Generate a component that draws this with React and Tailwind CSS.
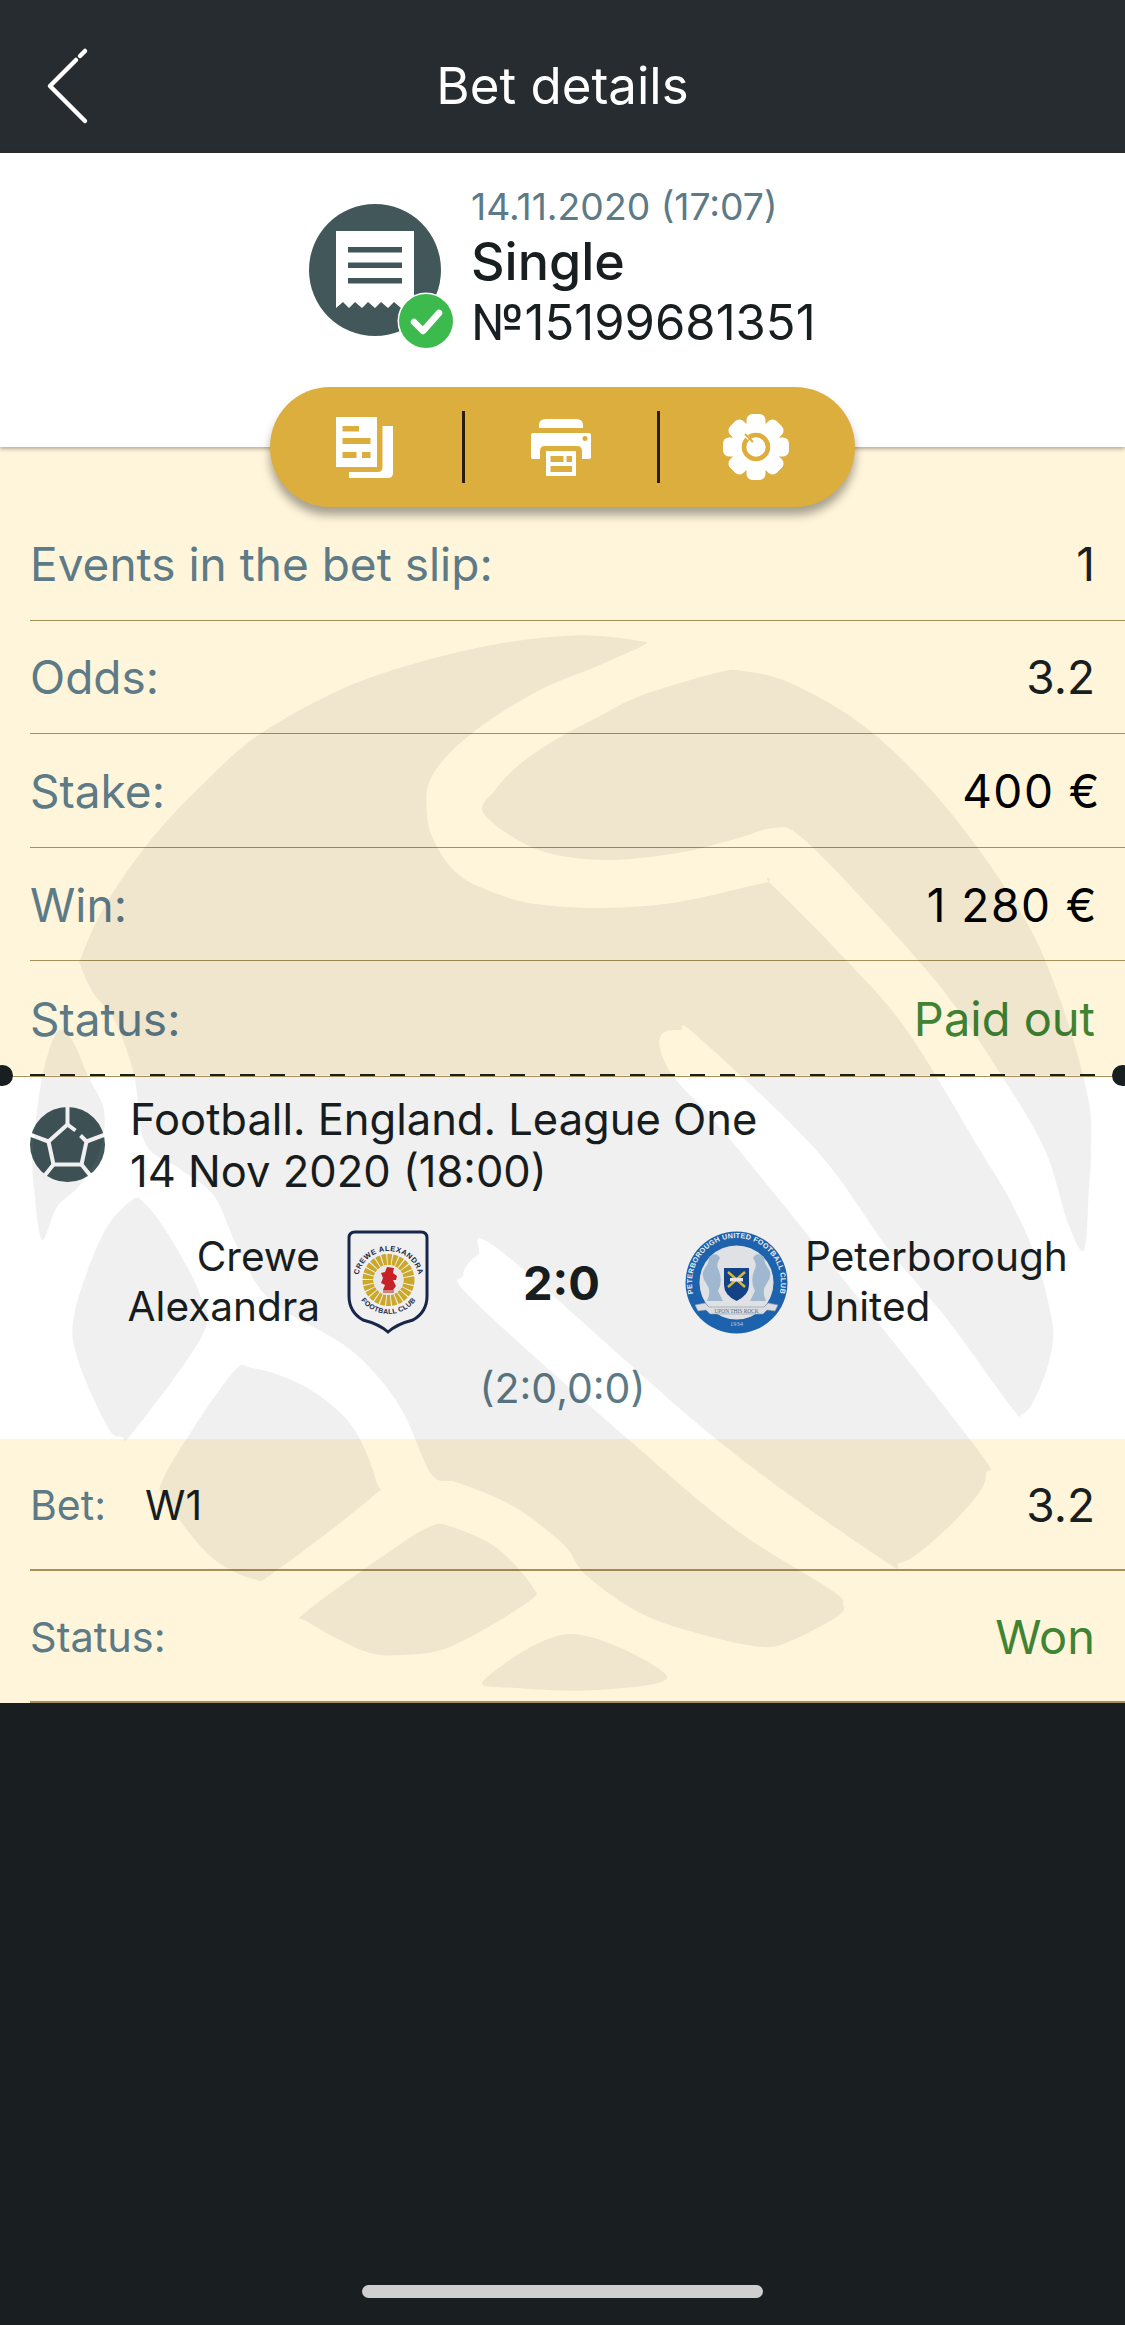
import React from "react";

const smooth = (pts) => {
  const n = pts.length;
  let d = `M${pts[0][0]} ${pts[0][1]}`;
  for (let i = 0; i < n; i++) {
    const p0 = pts[(i - 1 + n) % n];
    const p1 = pts[i];
    const p2 = pts[(i + 1) % n];
    const p3 = pts[(i + 2) % n];
    const c1x = p1[0] + (p2[0] - p0[0]) / 6;
    const c1y = p1[1] + (p2[1] - p0[1]) / 6;
    const c2x = p2[0] - (p3[0] - p1[0]) / 6;
    const c2y = p2[1] - (p3[1] - p1[1]) / 6;
    d += `C${c1x.toFixed(1)} ${c1y.toFixed(1)} ${c2x.toFixed(1)} ${c2y.toFixed(1)} ${p2[0]} ${p2[1]}`;
  }
  return d + "Z";
};

const shapes = [
  // main mass
  [[644,645],[640,641],[600,636],[563,636],[497,644],[420,662],[344,688],[260,734],[205,782],[153,837],[107,902],[82,955],[81,967],[94,994],[115,1021],[134,1075],[145,1143],[180,1169],[214,1196],[237,1246],[270,1300],[344,1345],[383,1383],[406,1418],[432,1475],[459,1483],[513,1506],[563,1544],[586,1575],[640,1613],[700,1634],[762,1647],[793,1640],[838,1616],[843,1604],[831,1590],[735,1529],[628,1439],[473,1300],[463,1275],[478,1255],[502,1252],[716,1439],[880,1558],[900,1563],[925,1548],[965,1510],[986,1475],[965,1433],[739,1150],[678,1082],[661,1052],[662,1034],[680,1030],[697,1036],[816,1150],[889,1250],[946,1318],[1012,1408],[1022,1414],[1032,1404],[1046,1372],[1053,1340],[1050,1310],[1035,1255],[1010,1200],[980,1150],[908,1032],[850,964],[772,885],[764,883],[678,902],[602,908],[536,904],[495,893],[459,875],[436,845],[427,814],[432,776],[471,734],[536,692],[600,665]],
  // inner lobe + right crescent
  [[484,814],[495,790],[520,764],[555,740],[600,716],[640,696],[716,673],[743,671],[793,684],[869,730],[946,807],[1022,914],[1061,1002],[1088,1097],[1091,1150],[1089,1188],[1084,1250],[1068,1223],[1045,1150],[1003,1078],[946,994],[869,906],[801,837],[774,828],[735,839],[678,853],[602,860],[536,849]],
  // left crescent
  [[57,1032],[42,1078],[33,1150],[34,1188],[42,1240],[57,1207],[80,1185],[100,1150],[104,1110],[88,1076],[72,1040]],
  // left lobe
  [[132,1200],[103,1234],[75,1311],[77,1357],[107,1426],[122,1437],[134,1431],[203,1334],[199,1292],[168,1234],[145,1204]],
  // mid lobe
  [[253,1368],[230,1376],[165,1475],[168,1502],[210,1556],[253,1579],[276,1571],[371,1498],[377,1483],[352,1426],[306,1387]],
  // lower lobe
  [[429,1527],[383,1556],[306,1612],[308,1622],[364,1651],[402,1655],[452,1646],[528,1602],[532,1586],[497,1548],[452,1527]],
  // bottom sliver
  [[570,1634],[484,1680],[517,1688],[600,1690],[667,1676]],
];

const Watermark = () => (
  <svg
    className="absolute left-0 top-0 pointer-events-none"
    width="1125"
    height="1702"
    viewBox="0 0 1125 1702"
  >
    {shapes.map((s, i) => (
      <path key={i} d={smooth(s)} fill="#000" fillOpacity="0.06" />
    ))}
  </svg>
);

const Receipt = () => (
  <svg width="150" height="150" viewBox="309 204 150 150" className="shrink-0">
    <circle cx="375" cy="270" r="66" fill="#41575a" />
    <path
      d="M336 231H414V308L407 302L401 308L394 302L388 308L381 302L375 308L368 302L362 308L355 302L349 308L343 302L336 308Z"
      fill="#fff"
    />
    <rect x="348" y="247" width="54" height="5.5" fill="#41575a" />
    <rect x="348" y="262.5" width="54" height="5.5" fill="#41575a" />
    <rect x="348" y="278" width="54" height="5.5" fill="#41575a" />
    <circle cx="426" cy="321" r="28.5" fill="#fff" />
    <circle cx="426" cy="321" r="27" fill="#3dba4e" />
    <path d="M414 322L423 331L439 313" fill="none" stroke="#fff" strokeWidth="6.5" strokeLinecap="round" strokeLinejoin="round" />
  </svg>
);

const DocIcon = () => (
  <svg width="57" height="61" viewBox="336 418 57 61">
    <path
      fillRule="evenodd"
      d="M336 418H377V468H336ZM342.5 427V432.5H359V427ZM342.5 439V445H370.5V439ZM342.5 453V459H356.5V453ZM362 453V459H370.5V453Z"
      fill="#fff"
    />
    <path d="M382.5 427H393V474Q393 479 388 479H349V473H378Q382.5 473 382.5 468Z" fill="#fff" />
  </svg>
);

const PrinterIcon = () => (
  <svg width="60" height="57" viewBox="531 420 60 57">
    <path d="M539 429V426Q539 420 546 420H576Q583 420 583 426V429Z" fill="#fff" />
    <path d="M533 434H589Q591 434 591 436V458Q591 460 589 460H582V452Q582 447 577 447H545Q540 447 540 452V460H533Q531 460 531 458V436Q531 434 533 434Z" fill="#fff" />
    <circle cx="585" cy="439.5" r="2.5" fill="#dcae3d" />
    <path
      fillRule="evenodd"
      d="M546 452H576V477H546ZM550.5 457V463H563.5V457ZM566.5 457V463H572V457ZM550.5 467V473H572V467Z"
      fill="#fff"
    />
  </svg>
);

const GearIcon = () => (
  <svg width="66" height="66" viewBox="-33 -33 66 66">
    <circle r="24" fill="#fff" />
    {[0, 45, 90, 135].map((a) => (
      <rect key={a} x="-9.5" y="-33" width="19" height="66" rx="6" fill="#fff" transform={`rotate(${a})`} />
    ))}
    <circle r="12" fill="none" stroke="#dcae3d" strokeWidth="4.6" />
    <path d="M-14 -16L-7 -8" stroke="#fff" strokeWidth="3.4" />
    <path d="M-11 -13L-3 -5" stroke="#dcae3d" strokeWidth="2" />
  </svg>
);

const Ball = () => (
  <svg width="75" height="75" viewBox="-37.5 -37.5 75 75" className="shrink-0">
    <circle r="37.5" fill="#41575a" />
    <g fill="none" stroke="#fff" strokeWidth="4" strokeLinecap="butt" strokeLinejoin="round">
      <path d="M8 -14L0 -20L-19 -3L-14 20H14L19 -3L13 -9" />
      <path d="M0 -20V-38M19 -3L38 -10M14 20L26 35M-14 20L-26 35M-19 -3L-38 -10" />
    </g>
  </svg>
);

const CreweCrest = () => (
  <svg width="82" height="104" viewBox="0 0 82 104" className="shrink-0">
    <path
      d="M8 2H74Q80 2 80 8V66Q80 82 66 90Q50 94 41 102Q32 94 16 90Q2 82 2 66V8Q2 2 8 2Z"
      fill="none"
      stroke="#1a2a4e"
      strokeWidth="3"
    />
    <circle cx="41.5" cy="50" r="20.5" fill="none" stroke="#d8b32c" strokeWidth="11" strokeDasharray="4 1" />
    <circle cx="41.5" cy="50" r="15" fill="#f6f6f6" />
    <path
      d="M40 37L47 38L46 43L50 46L49 50L46 50L49 56L46 60H36L38 55L34 53L36 48L34 43L38 42Z"
      fill="#d3242a"
    />
    <rect x="36" y="60" width="11" height="3" fill="#e28a86" />
    <defs>
      <path id="crewe-top" d="M10.5 52A31 31 0 1 1 72.5 52" />
      <path id="crewe-bot" d="M9 60A34 34 0 0 0 74 60" />
    </defs>
    <text fontSize="7.4" fontWeight="700" letterSpacing="0.5" fill="#1a2a4e" fontFamily="Liberation Sans, sans-serif">
      <textPath href="#crewe-top" startOffset="50%" textAnchor="middle">CREWE ALEXANDRA</textPath>
    </text>
    <text fontSize="7" fontWeight="700" letterSpacing="0.3" fill="#1a2a4e" fontFamily="Liberation Sans, sans-serif">
      <textPath href="#crewe-bot" startOffset="50%" textAnchor="middle">FOOTBALL CLUB</textPath>
    </text>
  </svg>
);

const PeterboroughCrest = () => (
  <svg width="103" height="103" viewBox="0 0 103 103" className="shrink-0">
    <circle cx="51.5" cy="51.5" r="51" fill="#1f69b8" />
    <circle cx="51.5" cy="51.5" r="37" fill="#eef0f3" />
    <defs>
      <path id="pboro" d="M12 72A44.5 44.5 0 1 1 91 72" />
    </defs>
    <text fontSize="7.2" fontWeight="700" letterSpacing="0.25" fill="#fff" fontFamily="Liberation Sans, sans-serif">
      <textPath href="#pboro" startOffset="50%" textAnchor="middle">PETERBOROUGH UNITED FOOTBALL CLUB</textPath>
    </text>
    <path d="M24 26Q31 20 35 27Q30 34 34 40Q38 50 33 60L38 70H22Q27 60 21 52Q15 44 20 37Q24 32 24 26Z" fill="#a9c4dc" />
    <path d="M79 26Q72 20 68 27Q73 34 69 40Q65 50 70 60L65 70H81Q76 60 82 52Q88 44 83 37Q79 32 79 26Z" fill="#a9c4dc" />
    <path d="M39 37H64V54Q64 64 51.5 70Q39 64 39 54Z" fill="#17468f" />
    <path d="M43 41L60 56M60 41L43 56" stroke="#e4c63a" strokeWidth="2.4" />
    <rect x="45" y="47" width="13" height="3.4" fill="#f2f2f2" />
    <path d="M10 74L20 72L24 76H79L83 72L93 74L90 80L82 79L78 83H25L21 79L13 80Z" fill="#e9ebee" stroke="#8fa3b5" strokeWidth="0.6" />
    <text x="51.5" y="81.5" fontSize="5.4" textAnchor="middle" fill="#5d6f80" fontFamily="Liberation Serif, serif">UPON THIS ROCK</text>
    <text x="51.5" y="95" fontSize="6.4" textAnchor="middle" fill="#c9daea" fontFamily="Liberation Serif, serif">1934</text>
  </svg>
);

const Row = ({ label, value, valueClass = "text-[46px] text-[#191e21]", border = true }) => (
  <div className={`ml-[30px] pr-[30px] pt-[2px] h-[114px] flex items-center justify-between ${border ? "border-b border-[#a89158]" : ""}`}>
    <span className="text-[46px] text-[#5d7a87]">{label}</span>
    <span className={valueClass}>{value}</span>
  </div>
);

export default function App() {
  return (
    <div className="relative w-[1125px] h-[2325px] flex flex-col overflow-hidden bg-[#191e21] font-[Inter,'Noto_Sans',sans-serif]">
      {/* Header */}
      <div className="h-[153px] shrink-0 bg-[#262c2f] relative flex items-center justify-center pt-[18px]">
        <svg className="absolute left-0 top-0" width="110" height="153" viewBox="0 0 110 153">
          <path d="M85 51L80 56M76 60L50 86L85 121" fill="none" stroke="#fff" strokeWidth="4.5" strokeLinecap="round" strokeLinejoin="round" />
        </svg>
        <span className="text-[51px] text-white leading-none">Bet details</span>
      </div>

      {/* Summary */}
      <div className="h-[294px] shrink-0 bg-white flex justify-center items-start pt-[30px] relative z-10 shadow-[0_2px_4px_rgba(0,0,0,0.3)]">
        <div className="flex items-start gap-[12px] w-[507px]">
          <div className="mt-[21px]">
            <Receipt />
          </div>
          <div className="flex flex-col">
            <span className="text-[37.3px] leading-[48px] text-[#5d7a87]">14.11.2020 (17:07)</span>
            <span className="text-[52px] leading-[62px] font-medium text-[#191e21]">Single</span>
            <span className="text-[49px] leading-[60px] text-[#191e21]">№15199681351</span>
          </div>
        </div>
      </div>

      {/* Bet summary rows */}
      <div className="h-[628px] shrink-0 bg-[#fff5da] pt-[60px] flex flex-col">
        <Row label="Events in the bet slip:" value="1" />
        <Row label="Odds:" value="3.2" />
        <Row label="Stake:" value="400 €" valueClass="text-[46px] text-black tracking-[1.5px] -mr-[6px]" />
        <Row label="Win:" value="1 280 €" valueClass="text-[46px] text-black tracking-[1.5px] -mr-[3px]" />
        <Row label="Status:" value="Paid out" valueClass="text-[47px] text-[#3f8333]" border={false} />
      </div>

      {/* Event */}
      <div className="h-[364px] shrink-0 bg-white relative">
        <div className="flex gap-[25px] pl-[30px] pt-[18px]">
          <div className="mt-[14px]">
            <Ball />
          </div>
          <div className="text-[43.5px] leading-[52px] text-[#191e21]">
            <div>Football. England. League One</div>
            <div>14 Nov 2020 (18:00)</div>
          </div>
        </div>
        <div className="flex items-center mt-[33px] h-[104px]">
          <div className="w-[320px] text-right text-[40.6px] leading-[50px] text-[#191e21] shrink-0">
            <div>Crewe</div>
            <div>Alexandra</div>
          </div>
          <div className="ml-[27px]">
            <CreweCrest />
          </div>
          <div className="w-[256px] pl-[9px] pt-[2px] text-center text-[47px] font-bold text-[#191e21] shrink-0">2:0</div>
          <PeterboroughCrest />
          <div className="ml-[17px] text-[40.6px] leading-[50px] text-[#191e21]">
            <div>Peterborough</div>
            <div>United</div>
          </div>
        </div>
        <div className="text-center text-[41px] leading-[50px] text-[#5d7a87] mt-[29px]">(2:0,0:0)</div>
      </div>

      {/* Bet rows */}
      <div className="h-[264px] shrink-0 bg-[#fff5da] flex flex-col">
        <div className="ml-[30px] pr-[30px] pt-[3px] h-[132px] flex items-center justify-between border-b-2 border-[#a89158]">
          <div className="flex items-center">
            <span className="w-[115px] text-[41px] text-[#5d7a87]">Bet:</span>
            <span className="text-[41px] text-[#191e21]">W1</span>
          </div>
          <span className="text-[46px] text-[#191e21]">3.2</span>
        </div>
        <div className="ml-[30px] pr-[30px] pt-[3px] h-[132px] flex items-center justify-between border-b-2 border-[#a89158]">
          <span className="text-[41.5px] text-[#5d7a87]">Status:</span>
          <span className="text-[47px] text-[#3f8333]">Won</span>
        </div>
      </div>

      {/* Footer */}
      <div className="flex-1 flex items-end justify-center pb-[27px]">
        <div className="w-[401px] h-[13px] rounded-full bg-[#cfcfcf]" />
      </div>

      <Watermark />

      {/* Perforation */}
      <div className="absolute left-[30px] top-[1074px] flex gap-[15px]">
        {Array.from({ length: 36 }).map((_, i) => (
          <div key={i} className="w-[15px] h-[3px] bg-[#191e21]" />
        ))}
      </div>
      <div className="absolute left-0 right-0 top-[1076px] h-px bg-[#a89158]" />
      <div className="absolute left-[-8px] top-[1065px] w-[21px] h-[21px] rounded-full bg-[#191e21]" />
      <div className="absolute right-[-8px] top-[1065px] w-[21px] h-[21px] rounded-full bg-[#191e21]" />

      {/* Action pill */}
      <div className="absolute z-20 left-[270px] top-[387px] w-[585px] h-[120px] rounded-full bg-[#dcae3d] flex items-center shadow-[0_8px_10px_rgba(0,0,0,0.35)]">
        <div className="w-[192px] flex justify-center pr-[4px]">
          <DocIcon />
        </div>
        <div className="w-[3px] h-[72px] bg-[#2a1d0a]" />
        <div className="w-[192px] flex justify-center">
          <PrinterIcon />
        </div>
        <div className="w-[3px] h-[72px] bg-[#2a1d0a]" />
        <div className="w-[195px] flex justify-center pr-[4px]">
          <GearIcon />
        </div>
      </div>
    </div>
  );
}
